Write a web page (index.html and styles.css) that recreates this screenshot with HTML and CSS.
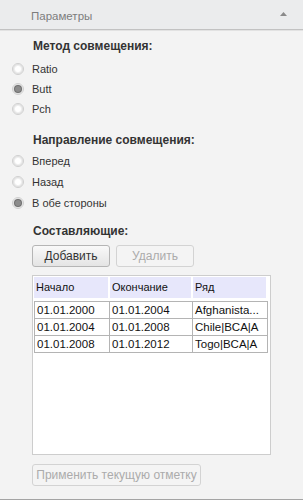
FILE: index.html
```html
<!DOCTYPE html>
<html>
<head>
<meta charset="utf-8">
<link rel="stylesheet" href="styles.css">
</head>
<body>
<div class="panel">
  <div class="header">
    <span class="header-title">Параметры</span>
    <svg class="header-arrow" width="7" height="4" viewBox="0 0 7 4"><path d="M0 4 L3.5 0 L7 4 Z" fill="#8a8a8a"/></svg>
  </div>
  <div class="content">
    <div class="group">
      <div class="title">Метод совмещения:</div>
      <div class="radios">
        <div class="radio-row"><span class="radio"></span><span>Ratio</span></div>
        <div class="radio-row"><span class="radio checked"></span><span>Butt</span></div>
        <div class="radio-row"><span class="radio"></span><span>Pch</span></div>
      </div>
    </div>
    <div class="group group2">
      <div class="title">Направление совмещения:</div>
      <div class="radios radios2">
        <div class="radio-row"><span class="radio"></span><span>Вперед</span></div>
        <div class="radio-row"><span class="radio"></span><span>Назад</span></div>
        <div class="radio-row"><span class="radio checked"></span><span>В обе стороны</span></div>
      </div>
    </div>
    <div class="group group3">
      <div class="title">Составляющие:</div>
      <div class="buttons">
        <button class="btn">Добавить</button>
        <button class="btn disabled">Удалить</button>
      </div>
      <div class="grid-box">
        <div class="grid-head">
          <div class="hcell c1">Начало</div>
          <div class="hcell c2">Окончание</div>
          <div class="hcell c3">Ряд</div>
        </div>
        <table class="grid-data">
          <tr><td class="c1">01.01.2000</td><td class="c2">01.01.2004</td><td class="c3">Afghanista...</td></tr>
          <tr><td class="c1">01.01.2004</td><td class="c2">01.01.2008</td><td class="c3">Chile|BCA|A</td></tr>
          <tr><td class="c1">01.01.2008</td><td class="c2">01.01.2012</td><td class="c3">Togo|BCA|A</td></tr>
        </table>
      </div>
      <button class="btn disabled apply">Применить текущую отметку</button>
    </div>
  </div>
</div>
</body>
</html>
```
FILE: styles.css
```css
html, body {
  margin: 0;
  padding: 0;
}
body {
  width: 303px;
  height: 500px;
  background: #f3f3f3;
  font-family: "Liberation Sans", Arial, sans-serif;
  font-size: 11px;
  color: #2b2b2b;
  overflow: hidden;
}
.panel {
  height: 499px;
  border-bottom: 1px solid #a4a4a4;
  box-sizing: content-box;
  display: flex;
  flex-direction: column;
}
.header {
  height: 29px;
  background: #ebeced;
  border-bottom: 1px solid #c2c2c2;
  box-shadow: 0 1px 0 #e2e2e2;
  display: flex;
  align-items: center;
  justify-content: space-between;
  padding: 0 16px 0 31px;
  flex-shrink: 0;
}
.header-title {
  color: #7d7d7d;
  font-size: 11.5px;
  margin-top: 2px;
}
.header-arrow {
  display: block;
  margin-top: -1px;
}
.content {
  padding: 10px 0 0 12px;
}
.title {
  font-weight: bold;
  font-size: 12px;
  color: #333;
  line-height: 13px;
  padding-left: 21px;
}
.radios {
  margin-top: 6px;
  display: flex;
  flex-direction: column;
}
.radios2 {
  margin-top: 3px;
}
.radio-row {
  height: 20px;
  display: flex;
  align-items: center;
  gap: 8px;
  color: #333;
}
.radios2 .radio-row {
  height: 21px;
}
.radio {
  width: 12px;
  height: 12px;
  border-radius: 50%;
  border: 1px solid #cfcfcf;
  background: radial-gradient(circle, #ffffff 0 2.5px, #f0f0f0 3.5px, #e2e2e2 4.5px, #fbfbfb 5.5px);
  box-sizing: border-box;
  display: flex;
  align-items: center;
  justify-content: center;
  flex-shrink: 0;
}
.radio.checked::after {
  content: "";
  width: 6px;
  height: 6px;
  border-radius: 50%;
  background: #8c8c8c;
  box-shadow: 0 0 0 1px #6f6f6f;
}
.group2 {
  margin-top: 15px;
}
.group3 {
  margin-top: 12px;
  padding-left: 20px;
  display: flex;
  flex-direction: column;
  align-items: flex-start;
}
.group3 .title {
  padding-left: 1px;
}
.buttons {
  margin-top: 7px;
  display: flex;
  gap: 6px;
}
.btn {
  font-family: inherit;
  font-size: 12px;
  width: 78px;
  height: 22px;
  border: 1px solid #b5b5b5;
  border-radius: 3px;
  background: linear-gradient(#f9f9f9, #e4e4e4);
  color: #333;
  padding: 0;
  margin: 0;
}
.btn.disabled {
  background: #f4f4f4;
  border-color: #d3d3d3;
  color: #ababab;
}
.grid-box {
  margin-top: 8px;
  width: 239px;
  height: 180px;
  box-sizing: border-box;
  border: 1px solid #cdcdcd;
  background: #fff;
  padding: 1px;
}
.grid-head {
  display: grid;
  grid-template-columns: 74px 81px 73px;
  column-gap: 2px;
  height: 21px;
}
.hcell {
  background: #e7e7fb;
  line-height: 21px;
  padding-left: 2px;
  color: #111;
}
.grid-data {
  margin-top: 3px;
  border-collapse: collapse;
  table-layout: fixed;
  width: 234px;
}
.grid-data td {
  border: 1px solid #b4b4b4;
  height: 16px;
  padding: 0 0 0 2px;
  color: #111;
  white-space: nowrap;
  overflow: hidden;
  font-size: 11.5px;
}
.grid-data td.c1 { width: 72px; }
.grid-data td.c2 { width: 80px; }
.apply {
  margin-top: 9px;
  width: 169px;
}
```
